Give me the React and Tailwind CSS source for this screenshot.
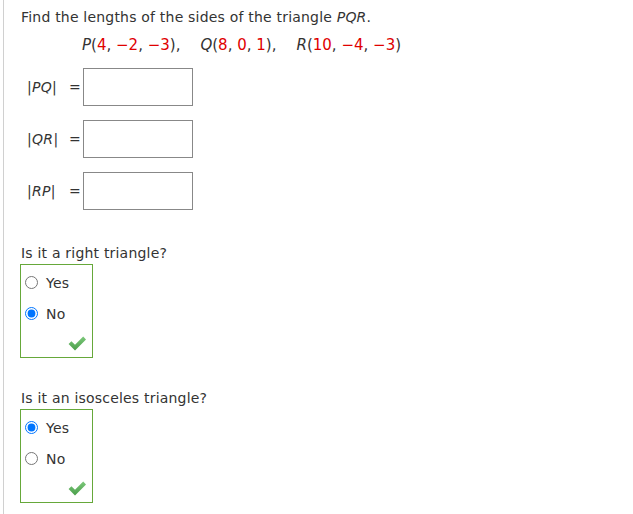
import React from "react";

function Check() {
  return (
    <svg width="19" height="15" viewBox="0 0 19 15">
      <defs>
        <linearGradient id="g" x1="0" y1="0" x2="0" y2="1">
          <stop offset="0" stopColor="#7cc87a" />
          <stop offset="1" stopColor="#4a9e4a" />
        </linearGradient>
      </defs>
      <path d="M0.6 8 L3.4 5.2 L7 8.8 L15.2 0.6 L18 3.4 L7 14.4 Z" fill="url(#g)" />
    </svg>
  );
}

function Radio({ label, checked }) {
  return (
    <label className="flex items-center h-[31px]">
      <input
        type="radio"
        checked={checked}
        onChange={() => {}}
        className="m-0 ml-[4px] w-[13px] h-[13px]"
      />
      <span className="ml-[8px]">{label}</span>
    </label>
  );
}

function Group({ yes }) {
  return (
    <div className="-ml-px w-[73px] h-[94px] border border-[#66a83a] flex flex-col pt-[2px] relative">
      <Radio label="Yes" checked={yes} />
      <Radio label="No" checked={!yes} />
      <div className="absolute left-[47px] top-[71px]">
        <Check />
      </div>
    </div>
  );
}

function Field({ a, b }) {
  return (
    <div className="flex items-center h-[38px]">
      <div className="w-[42px] ml-[6px] text-[14px] tracking-[0.3px]">
        |<i>{a}</i><i>{b}</i>|
      </div>
      <span className="w-[14px]">=</span>
      <div className="w-[110px] h-[38px] border border-[#888] bg-white" />
    </div>
  );
}

export default function App() {
  const red = "text-[#e00000]";
  return (
    <div
      className="w-[633px] h-[514px] bg-white text-[#333] text-[14px] leading-[16px] tracking-[0.2px]"
      style={{ fontFamily: "'DejaVu Sans', Verdana, sans-serif" }}
    >
      <div className="ml-[3px] h-full border-l border-[#d0d0d0] pl-[17px] pt-[9px]">
        <div>
          Find the lengths of the sides of the triangle <i>PQR</i>.
        </div>
        <div className="ml-[61px] mt-[12px] text-[15px] tracking-normal flex">
          <span>
            <i>P</i>(<span className={red}>4</span>, <span className={red}>−2</span>, <span className={red}>−3</span>),
          </span>
          <span className="ml-[20px]">
            <i>Q</i>(<span className={red}>8</span>, <span className={red}>0</span>, <span className={red}>1</span>),
          </span>
          <span className="ml-[20px]">
            <i>R</i>(<span className={red}>10</span>, <span className={red}>−4</span>, <span className={red}>−3</span>)
          </span>
        </div>
        <div className="mt-[15px] flex flex-col gap-[14px]">
          <Field a="P" b="Q" />
          <Field a="Q" b="R" />
          <Field a="R" b="P" />
        </div>
        <div className="mt-[35px]">Is it a right triangle?</div>
        <div className="mt-[3px]">
          <Group yes={false} />
        </div>
        <div className="mt-[32px]">Is it an isosceles triangle?</div>
        <div className="mt-[3px]">
          <Group yes={true} />
        </div>
      </div>
    </div>
  );
}
